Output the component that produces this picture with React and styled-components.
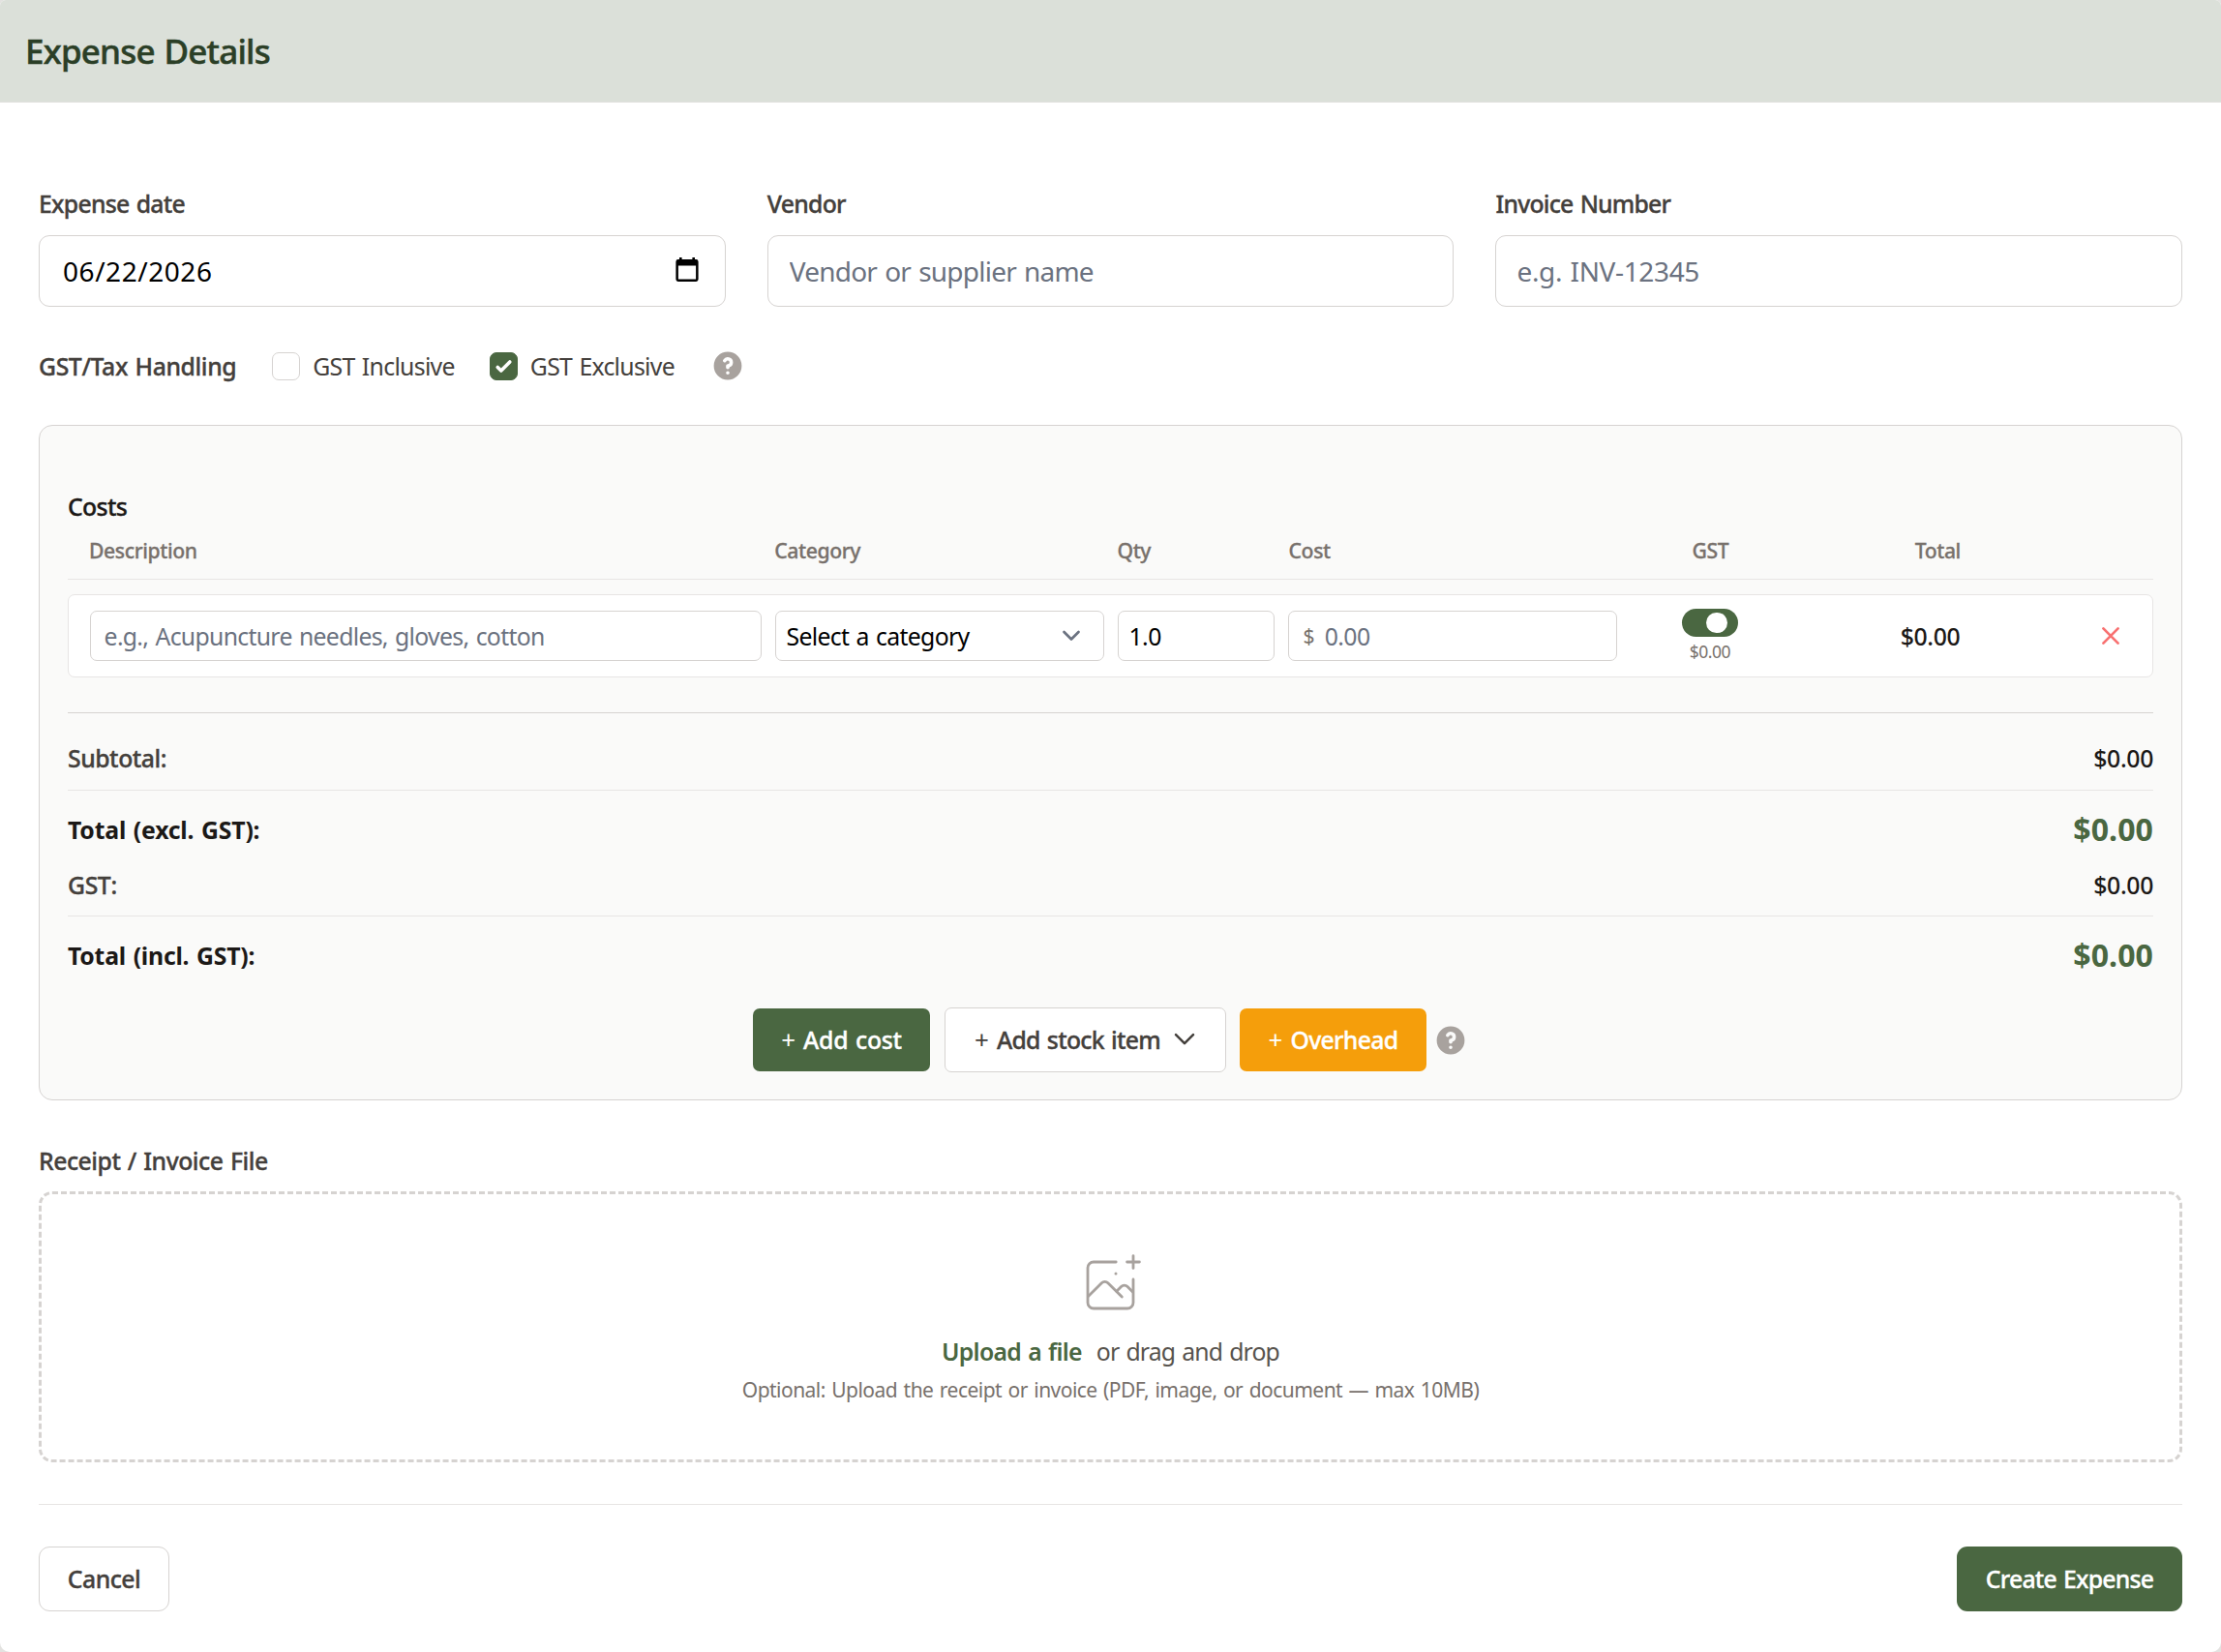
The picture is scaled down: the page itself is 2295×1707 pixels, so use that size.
import React, { useState } from "react";
import styled, { createGlobalStyle } from "styled-components";
import { HiQuestionMarkCircle } from "react-icons/hi";

const GlobalStyle = createGlobalStyle`
  * {
    box-sizing: border-box;
  }
  body {
    margin: 0;
    background: #e3e2e0;
    font-family: "Noto Sans", "Open Sans", sans-serif;
    font-size: 24.8px;
    line-height: 36px;
    word-spacing: 1.5px;
    color: #1c1917;
  }
  input, button {
    font-family: inherit;
    font-size: inherit;
    word-spacing: inherit;
  }
`;

const Page = styled.div`
  min-height: 1707px;
  background: #fff;
  border-radius: 6px 6px 10px 10px;
  overflow: hidden;
`;

const Header = styled.header`
  display: flex;
  align-items: center;
  height: 106px;
  padding: 0 26px;
  background: #dbe0d9;
  border-bottom: 1px solid #e0e0dd;
`;

const Title = styled.h1`
  margin: 0;
  font-size: 35px;
  font-weight: 500;
  letter-spacing: -0.8px;
  color: #2b3f27;
  -webkit-text-stroke: 0.5px;
`;

const Form = styled.form`
  display: flex;
  flex-direction: column;
  padding: 86px 40px 42px;
`;

const Text = styled.span`
  font-size: ${props => props.$size || 24.8}px;
  font-weight: ${props => props.$weight || 400};
  letter-spacing: ${props => props.$track || 0}px;
  color: ${props => props.$color || "#1c1917"};
  white-space: pre;
`;

// sits between medium and semibold
const Label = styled(Text)`
  font-weight: 500;
  -webkit-text-stroke: 0.35px;
`;

const Fields = styled.div`
  display: grid;
  grid-template-columns: repeat(3, 1fr);
  gap: 43.2px;
`;

const Field = styled.label`
  display: flex;
  flex-direction: column;
  gap: 15px;
`;

const InputBox = styled.div`
  display: flex;
  align-items: center;
  height: ${props => (props.$small ? 52 : 74)}px;
  padding: 0 ${props => props.$pad || 22}px;
  background: #fff;
  border: 1px solid #d6d3d1;
  border-radius: ${props => (props.$small ? 7 : 11)}px;
`;

const DateBox = styled(InputBox)`
  padding: 0 27px 0 24px;
  svg {
    margin-bottom: 3px;
  }
`;

const Input = styled.input`
  flex: 1;
  min-width: 0;
  padding: 0;
  border: 0;
  outline: 0;
  background: transparent;
  font-size: ${props => props.$size || 28}px;
  letter-spacing: ${props => props.$track || 0}px;
  color: #000;
  &::placeholder {
    color: #6b7280;
    opacity: 1;
  }
`;

const SelectBox = styled(InputBox)`
  padding: 0 23px 0 11px;
  justify-content: space-between;
`;

const TaxRow = styled.div`
  display: flex;
  align-items: center;
  height: 36px;
  margin-top: 43px;
`;

const Option = styled.label`
  display: flex;
  align-items: center;
  gap: 13px;
  margin-left: ${props => props.$gap}px;
  cursor: pointer;
`;

const Check = styled.span`
  display: flex;
  width: 29px;
  height: 29px;
  border: 1px solid ${props => (props.$on ? "#4a6741" : "#d6d3d1")};
  border-radius: 7px;
  background: ${props => (props.$on ? "#4a6741" : "#fff")};
`;

const Help = styled(HiQuestionMarkCircle)`
  width: 36px;
  height: 36px;
  margin-left: ${props => props.$gap}px;
  color: #a8a29e;
`;

const Card = styled.section`
  height: 698px;
  margin-top: 43px;
  padding: 65px 29px 28px;
  background: #fafaf9;
  border: 1px solid #d6d3d1;
  border-radius: 14px;
`;

const CostGrid = styled.div`
  display: grid;
  grid-template-columns: repeat(12, 1fr);
  column-gap: 14px;
  align-items: center;
`;

const CostHead = styled(CostGrid)`
  height: 48px;
  margin-top: 10px;
  padding: 0 22px 11px;
  border-bottom: 1px solid #e7e5e4;
  font-size: 21.2px;
`;

const CostRow = styled(CostGrid)`
  height: 86px;
  margin-top: 15px;
  padding: 0 21.6px;
  background: #fff;
  border: 1px solid #e7e5e4;
  border-radius: 7px;
`;

const Cell = styled.div`
  grid-column: span ${props => props.$span || 1};
  min-width: 0;
  text-align: ${props => props.$align || "left"};
`;

const HeadCell = styled(Cell)`
  font-weight: 500;
  letter-spacing: -0.42px;
  color: #78716c;
  -webkit-text-stroke: 0.3px;
`;

const GstCell = styled.div`
  display: flex;
  flex-direction: column;
  align-items: center;
  gap: 3px;
  line-height: 24px;
`;

const Toggle = styled.button`
  display: flex;
  align-items: center;
  justify-content: ${props => (props.$on ? "flex-end" : "flex-start")};
  width: 58px;
  height: 29px;
  padding: 0 11px 0 4px;
  border: 0;
  border-radius: 15px;
  background: ${props => (props.$on ? "#4a6741" : "#d6d3d1")};
`;

const Knob = styled.span`
  width: 21.6px;
  height: 21.6px;
  border-radius: 50%;
  background: #fff;
`;

const RemoveButton = styled.button`
  display: inline-flex;
  padding: 11px;
  border: 0;
  background: none;
  vertical-align: middle;
`;

const Totals = styled.div`
  margin-top: 36px;
  padding-top: 28px;
  border-top: 1px solid #d6d3d1;
`;

const TotalRow = styled.div`
  display: flex;
  justify-content: space-between;
  align-items: center;
  height: 36px;
`;

const GrandRow = styled(TotalRow)`
  height: 80px;
  margin-top: 15px;
  border-top: 1px solid #e7e5e4;
`;

const GstRow = styled(TotalRow)`
  margin-bottom: -1px;
`;

const Actions = styled.div`
  display: flex;
  justify-content: center;
  align-items: center;
  margin-top: 15px;
`;

const Button = styled.button`
  display: flex;
  align-items: center;
  justify-content: center;
  gap: 8px;
  width: ${props => props.$width}px;
  height: ${props => props.$height || 67}px;
  margin-right: ${props => props.$gap || 0}px;
  padding: 0 0 2px;
  border: ${props => (props.$bg ? 0 : "1px solid #d6d3d1")};
  border-radius: ${props => props.$radius || 11}px;
  background: ${props => props.$bg || "#fff"};
  color: ${props => (props.$bg ? "#fff" : "#44403c")};
  cursor: pointer;
  svg {
    margin-left: 5px;
  }
`;

const ButtonLabel = styled(Label)`
  color: inherit;
`;

const Plus = styled(Text)`
  color: inherit;
  font-size: 26px;
`;

const Upload = styled.div`
  display: flex;
  flex-direction: column;
  align-items: center;
  height: 280px;
  margin-top: 14px;
  padding-top: 51px;
  border: 3px dashed #d6d3d1;
  border-radius: 14px;
`;

const UploadLine = styled.div`
  display: flex;
  gap: 15px;
  margin-top: 7px;
`;

const UploadHint = styled.div`
  margin-top: 2px;
`;

const ReceiptLabel = styled.div`
  margin-top: 44px;
`;

const Footer = styled.footer`
  display: flex;
  justify-content: space-between;
  margin-top: 43px;
  padding-top: 43px;
  border-top: 1px solid #e7e5e4;
`;

const CalendarIcon = () => (
  <svg width="24" height="26" viewBox="0 0 24 26">
    <path
      fillRule="evenodd"
      d="M4 0h2.6v2h10.8V0H20v2h1.2A2.4 2.4 0 0 1 23.6 4.4v18.2a2.4 2.4 0 0 1-2.4 2.4H2.8a2.4 2.4 0 0 1-2.4-2.4V4.4A2.4 2.4 0 0 1 2.8 2H4zM2.9 8.4v14.1h18.2V8.4z"
    />
  </svg>
);

const CheckIcon = () => (
  <svg width="27" height="27" viewBox="0.5 0.5 15 15" fill="#fff">
    <path d="M12.207 4.793a1 1 0 010 1.414l-5 5a1 1 0 01-1.414 0l-2-2a1 1 0 011.414-1.414L6.5 9.086l4.293-4.293a1 1 0 011.414 0z" />
  </svg>
);

const ChevronIcon = ({ size = 20, width = 2.7, color = "#6b7280" }) => (
  <svg
    width={size}
    height={size}
    viewBox="0 0 20 20"
    fill="none"
    stroke={color}
    strokeWidth={width}
    strokeLinecap="round"
    strokeLinejoin="round"
  >
    <path d="M2.5 6l7.5 7.5L17.5 6" />
  </svg>
);

const CrossIcon = () => (
  <svg width="20" height="20" viewBox="0 0 20 20" fill="none" stroke="#f87171" strokeWidth="2.7" strokeLinecap="round">
    <path d="M2.4 2.4l15.2 15.2M17.6 2.4L2.4 17.6" />
  </svg>
);

const ImagePlusIcon = () => (
  <svg
    width="86"
    height="86"
    viewBox="5 0 86 86"
    fill="none"
    stroke="#a8a29e"
    strokeWidth="2.8"
    strokeLinecap="round"
    strokeLinejoin="round"
  >
    <path d="M53.2 19H30a6 6 0 0 0-6 6v36a6 6 0 0 0 6 6h35a6 6 0 0 0 6-6V37" />
    <path d="M24.5 54.5L38.3 40.7a4.6 4.6 0 0 1 6.6 0L59.3 55" />
    <path d="M53.8 49.3l4.7-4.8a4.6 4.6 0 0 1 6.6 0l5.4 5.4" />
    <path d="M71 12.6v12.8M64.6 19h12.8" />
    <circle cx="53" cy="31" r="1.5" fill="#a8a29e" stroke="none" />
  </svg>
);

export default () => {
  const [inclusive, setInclusive] = useState(false);
  const [gst, setGst] = useState(true);
  return (
    <>
      <GlobalStyle />
      <Page>
        <Header>
          <Title>Expense Details</Title>
        </Header>
        <Form onSubmit={e => e.preventDefault()}>
          <Fields>
            <Field>
              <Label $track={-0.75} $color="#44403c">Expense date</Label>
              <DateBox>
                <Input defaultValue="06/22/2026" $track={0.55} />
                <CalendarIcon />
              </DateBox>
            </Field>
            <Field>
              <Label $track={-0.75} $color="#44403c">Vendor</Label>
              <InputBox>
                <Input placeholder="Vendor or supplier name" $track={-0.77} />
              </InputBox>
            </Field>
            <Field>
              <Label $track={-0.8} $color="#44403c">Invoice Number</Label>
              <InputBox $pad={21}>
                <Input placeholder="e.g. INV-12345" $track={-0.35} />
              </InputBox>
            </Field>
          </Fields>

          <TaxRow>
            <Label $track={-0.4} $color="#44403c">GST/Tax Handling</Label>
            <Option $gap={37} onClick={() => setInclusive(true)}>
              <Check $on={inclusive}>{inclusive && <CheckIcon />}</Check>
              <Text $track={-0.7} $color="#44403c">GST Inclusive</Text>
            </Option>
            <Option $gap={36} onClick={() => setInclusive(false)}>
              <Check $on={!inclusive}>{!inclusive && <CheckIcon />}</Check>
              <Text $track={-0.7} $color="#44403c">GST Exclusive</Text>
            </Option>
            <Help $gap={37} />
          </TaxRow>

          <Card>
            <TotalRow>
              <Label $track={-0.65}>Costs</Label>
            </TotalRow>
            <CostHead>
              <HeadCell $span={4}>Description</HeadCell>
              <HeadCell $span={2}>Category</HeadCell>
              <HeadCell>Qty</HeadCell>
              <HeadCell $span={2}>Cost</HeadCell>
              <HeadCell $align="center">GST</HeadCell>
              <HeadCell $align="right">Total</HeadCell>
            </CostHead>
            <CostRow>
              <Cell $span={4}>
                <InputBox $small $pad={14}>
                  <Input $size={24.8} $track={-0.7} placeholder="e.g., Acupuncture needles, gloves, cotton" />
                </InputBox>
              </Cell>
              <Cell $span={2}>
                <SelectBox $small>
                  <Text $track={-0.68} $color="#000">Select a category</Text>
                  <ChevronIcon />
                </SelectBox>
              </Cell>
              <Cell>
                <InputBox $small $pad={11}>
                  <Input $size={24.8} $track={-0.6} defaultValue="1.0" />
                </InputBox>
              </Cell>
              <Cell $span={2}>
                <InputBox $small $pad={14}>
                  <Text $size={21} $track={1.6} $color="#78716c">$ </Text>
                  <Input $size={24.8} $track={-0.6} placeholder="0.00" />
                </InputBox>
              </Cell>
              <GstCell>
                <Toggle type="button" $on={gst} onClick={() => setGst(!gst)}>
                  <Knob />
                </Toggle>
                <Text $size={17.5} $track={-0.47} $color="#78716c">$0.00</Text>
              </GstCell>
              <Cell $align="right">
                <Text $weight={500} $track={-0.35}>$0.00</Text>
              </Cell>
              <Cell $align="right">
                <RemoveButton type="button">
                  <CrossIcon />
                </RemoveButton>
              </Cell>
            </CostRow>

            <Totals>
              <TotalRow>
                <Label $track={-0.48} $color="#44403c">Subtotal:</Label>
                <Text $weight={500} $track={-0.35}>$0.00</Text>
              </TotalRow>
              <GrandRow>
                <Text $weight={700} $track={-0.2}>Total (excl. GST):</Text>
                <Text $size={32} $weight={700} $track={0.1} $color="#4a6741">$0.00</Text>
              </GrandRow>
              <GstRow>
                <Label $track={-0.4} $color="#44403c">GST:</Label>
                <Text $weight={500} $track={-0.35}>$0.00</Text>
              </GstRow>
              <GrandRow>
                <Text $weight={700} $track={-0.23}>Total (incl. GST):</Text>
                <Text $size={32} $weight={700} $track={0.1} $color="#4a6741">$0.00</Text>
              </GrandRow>
            </Totals>

            <Actions>
              <Button type="button" $width={183} $height={65} $radius={7} $gap={15} $bg="#4a6741">
                <Plus>+</Plus>
                <ButtonLabel $track={-0.25}>Add cost</ButtonLabel>
              </Button>
              <Button type="button" $width={291} $radius={7} $gap={14}>
                <Plus>+</Plus>
                <ButtonLabel $track={-0.75}>Add stock item</ButtonLabel>
                <ChevronIcon size={24} width={2.1} color="#44403c" />
              </Button>
              <Button type="button" $width={193} $height={65} $radius={7} $bg="#f59e0b">
                <Plus>+</Plus>
                <ButtonLabel $track={-0.7}>Overhead</ButtonLabel>
              </Button>
              <Help $gap={7} />
            </Actions>
          </Card>

          <ReceiptLabel>
            <Label $track={-0.5} $color="#44403c">Receipt / Invoice File</Label>
          </ReceiptLabel>
          <Upload>
            <ImagePlusIcon />
            <UploadLine>
              <Text $weight={600} $track={-0.75} $color="#4a6741">Upload a file</Text>
              <Text $track={-0.87} $color="#57534e">or drag and drop</Text>
            </UploadLine>
            <UploadHint>
              <Text $size={21} $track={-0.53} $color="#78716c">
                Optional: Upload the receipt or invoice (PDF, image, or document — max 10MB)
              </Text>
            </UploadHint>
          </Upload>

          <Footer>
            <Button type="button" $width={135}>
              <ButtonLabel $track={-0.5}>Cancel</ButtonLabel>
            </Button>
            <Button type="submit" $width={233} $bg="#4a6741">
              <ButtonLabel $track={-0.8}>Create Expense</ButtonLabel>
            </Button>
          </Footer>
        </Form>
      </Page>
    </>
  );
};
